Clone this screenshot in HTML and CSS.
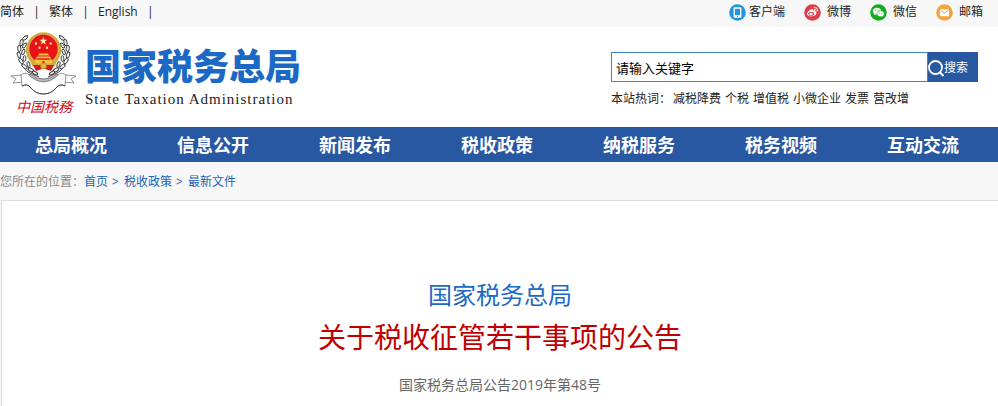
FILE: index.html
```html
<!DOCTYPE html>
<html lang="zh-CN">
<head>
  <meta charset="UTF-8">
  <meta name="viewport" content="width=device-width, initial-scale=1.0">
  <title>国家税务总局</title>
  <link rel="stylesheet" href="styles.css">
</head>
<body>

  <div class="topbar">
    <div class="langs">
      <a href="#">简体</a><span class="sep">|</span>
      <a href="#">繁体</a><span class="sep">|</span>
      <a href="#">English</a><span class="sep">|</span>
    </div>
    <div class="links">
      <a class="app" href="#">
        <svg viewBox="0 0 17 17"><circle cx="8.5" cy="8.5" r="8.3" fill="#2196dc"/><rect x="4.600" y="3.300" width="7.800" height="10.400" rx="1.2" fill="#fff"/><rect x="6" y="4.800" width="5" height="6.400" fill="#2196dc"/><circle cx="8.5" cy="12.4" r=".6" fill="#2196dc"/></svg>
        客户端</a>
      <a href="#">
        <svg viewBox="0 0 17 17"><circle cx="8.5" cy="8.5" r="8.3" fill="#dd3f4a"/><path d="M7.6 5.2c.9-.5 1.6 0 1.3 1.2 1.5-.5 2.7-.2 2.4 1 1.6.6 1.3 2.2.2 3.3-2.2 2.2-8.2 2.2-8.5-.7C2.900 8.300 5.600 5.800 7.600 5.200z" fill="#fff"/><ellipse cx="7.2" cy="9.800" rx="3" ry="2" fill="#dd3f4a"/><ellipse cx="7" cy="9.900" rx="1.600" ry="1.200" fill="#fff"/><path d="M10.300 3.600c2.300-.4 3.900 1.200 3.400 3.500M10.500 5.300c1.200-.2 1.900.5 1.700 1.600" fill="none" stroke="#fff" stroke-width=".9" stroke-linecap="round"/></svg>
        微博</a>
      <a href="#">
        <svg viewBox="0 0 17 17"><circle cx="8.5" cy="8.5" r="8.3" fill="#0fae1c"/><path d="M7 3.800c-2.400 0-4.200 1.500-4.200 3.400 0 1.100.6 2 1.500 2.600l-.4 1.400 1.600-.8c.5.1 1 .2 1.500.2 2.400 0 4.200-1.500 4.200-3.400S9.400 3.800 7 3.800z" fill="#fff"/><path d="M10.700 6.700c-2.100 0-3.700 1.300-3.700 3s1.600 3 3.700 3c.4 0 .9-.1 1.300-.2l1.300.7-.3-1.200c.8-.6 1.300-1.400 1.300-2.300 0-1.700-1.600-3-3.600-3z" fill="#fff" stroke="#0fae1c" stroke-width=".6"/><g fill="#0fae1c"><circle cx="5.600" cy="6.100" r=".6"/><circle cx="8.300" cy="6.100" r=".6"/><circle cx="9.500" cy="9" r=".5"/><circle cx="11.900" cy="9" r=".5"/></g></svg>
        微信</a>
      <a href="#">
        <svg viewBox="0 0 17 17"><circle cx="8.5" cy="8.5" r="8.3" fill="#f3a53a"/><rect x="4" y="5.200" width="9" height="7" rx=".8" fill="#fff"/><path d="M4.500 6l4 3.300 4-3.300" fill="none" stroke="#f3a53a" stroke-width="1"/></svg>
        邮箱</a>
    </div>
  </div>

  <header class="header">
    <a class="brand" href="#">
      <span class="emblem">
        <svg viewBox="10 30 68 67">
          <!-- wheat on both sides, the right one mirrors the left -->
          <defs>
            <g id="wheat">
              <path d="M28 35C17 44 16 62 28 72l11 5" fill="none" stroke="#444" stroke-width="1"/>
              <g fill="#eee" stroke="#333" stroke-width=".9">
                <ellipse cx="25" cy="38" rx="1.500" ry="3" transform="rotate(50 25 38)"/>
                <ellipse cx="21.500" cy="42.500" rx="1.600" ry="3.200" transform="rotate(10 21.500 42.500)"/>
                <ellipse cx="19.300" cy="48.500" rx="1.600" ry="3.200" transform="rotate(-5 19.300 48.500)"/>
                <ellipse cx="19" cy="55" rx="1.600" ry="3.200" transform="rotate(-20 19 55)"/>
                <ellipse cx="21" cy="61" rx="1.600" ry="3.200" transform="rotate(-35 21 61)"/>
                <ellipse cx="24.500" cy="66.500" rx="1.600" ry="3.200" transform="rotate(-50 24.500 66.500)"/>
                <ellipse cx="24.500" cy="45.500" rx="1.400" ry="3" transform="rotate(35 24.500 45.500)"/>
                <ellipse cx="23.300" cy="52" rx="1.400" ry="3" transform="rotate(20 23.300 52)"/>
                <ellipse cx="24.500" cy="58.500" rx="1.400" ry="3" transform="rotate(5 24.500 58.500)"/>
                <ellipse cx="28.500" cy="64.500" rx="1.400" ry="3" transform="rotate(-15 28.500 64.500)"/>
                <ellipse cx="31" cy="70" rx="1.600" ry="3.200" transform="rotate(-60 31 70)"/>
                <ellipse cx="35" cy="73" rx="1.400" ry="3" transform="rotate(-60 35 73)"/>
              </g>
            </g>
          </defs>
          <use href="#wheat"/>
          <use href="#wheat" transform="translate(87 0) scale(-1 1)"/>
          <!-- ribbon -->
          <path d="M30 74q6 5 13.500 5T57 74l4 4q-8 7-17.500 7T26 78z" fill="#bbb" stroke="#555" stroke-width=".8"/>
          <path d="M21 75l-10 1 5 3-3 4 11-1zM66 75l10 1-5 3 3 4-11-1z" fill="#fff" stroke="#666" stroke-width=".7"/>
          <path d="M21 75c2-2 5-2 7-1l3 3q6 5 12.500 5T56 77l3-3c2-1 5-1 7 1l-1 11q-5-3-9 2-5 6-12.500 6T31 88q-4-5-9-2z" fill="#fff" stroke="#666" stroke-width=".7"/>
          <path d="M22 86q5-3 9 2 5 6 12.500 6T56 88q4-5 9-2" fill="none" stroke="#444" stroke-width="1"/>
          <!-- national emblem -->
          <circle cx="43.500" cy="50" r="17.700" fill="#d6b043"/>
          <circle cx="43.500" cy="50" r="16.300" fill="none" stroke="#b8952f" stroke-width="1" stroke-dasharray="1.500 1.500"/>
          <circle cx="43.500" cy="49" r="14.200" fill="#ea1219"/>
          <path d="M43.300 37l1 2.800h3l-2.400 1.800.9 2.900-2.500-1.800-2.500 1.800.9-2.900-2.400-1.800h3z" fill="#fff6a0"/>
          <g fill="#fbe07a"><circle cx="36" cy="43.500" r="1.200"/><circle cx="39.500" cy="47.700" r="1.200"/><circle cx="47" cy="47.700" r="1.200"/><circle cx="50.600" cy="43.500" r="1.200"/></g>
          <path d="M39 53.500h9l1 2h-11zM37 56.500h13l1.500 2h-16zM35 59.500h17v4H35z" fill="#f6c43c"/>
          <path d="M38.500 58.500h10v1h-10zM42.500 61h2v2.500h-2z" fill="#c8201b"/>
          <path d="M30 60q13 9 27 0l-2 6q-11 5-23 0z" fill="#d9a934"/>
          <path d="M33 65l8 0h5l8 0-3 6-6-2h-3l-6 2z" fill="#d8161b"/>
          <circle cx="43.500" cy="66" r="3" fill="#e5b63a" stroke="#a87b1d" stroke-width=".6"/>
        </svg>
        <span class="caption">中国税務</span>
      </span>
      <span class="names">
        <span class="name-cn">国家税务总局</span>
        <span class="name-en">State Taxation Administration</span>
      </span>
    </a>

    <div class="search">
      <form class="search-form">
        <input type="text" value="请输入关键字" aria-label="关键字">
        <button type="submit">
          <svg viewBox="0 0 16 17"><circle cx="7.500" cy="7.500" r="6.500" fill="none" stroke="#fff" stroke-width="1.800"/><path d="M11.500 12l4 4" stroke="#fff" stroke-width="2"/></svg>搜索</button>
      </form>
      <div class="hot">
        <span>本站热词：</span>
        <a href="#">减税降费</a>
        <a href="#">个税</a>
        <a href="#">增值税</a>
        <a href="#">小微企业</a>
        <a href="#">发票</a>
        <a href="#">营改增</a>
      </div>
    </div>
  </header>

  <nav class="nav">
    <a href="#">总局概况</a>
    <a href="#">信息公开</a>
    <a href="#">新闻发布</a>
    <a href="#">税收政策</a>
    <a href="#">纳税服务</a>
    <a href="#">税务视频</a>
    <a href="#">互动交流</a>
  </nav>

  <div class="crumbs">
    <span>您所在的位置：</span>
    <a href="#">首页</a>
    <b>&gt;</b>
    <a href="#">税收政策</a>
    <b>&gt;</b>
    <a href="#">最新文件</a>
  </div>

  <main class="article">
    <h2>国家税务总局</h2>
    <h1>关于税收征管若干事项的公告</h1>
    <p>国家税务总局公告2019年第48号</p>
  </main>

</body>
</html>
```
FILE: styles.css
```css
* {
  box-sizing: border-box;
}

body {
  margin: 0;
  background: #f7f7f7;
  color: #222;
  font-family: "Open Sans", "Noto Sans CJK SC", sans-serif;
  font-size: 12px;
  line-height: 20px;
}

a {
  color: inherit;
  text-decoration: none;
}

svg {
  display: block;
  flex: none;
}

.topbar {
  display: flex;
  justify-content: space-between;
  height: 27px;
  padding: 2px 15px 5px 0;
}

.langs,
.links,
.links a {
  display: flex;
  align-items: center;
}

.sep {
  width: 25px;
  text-align: center;
}

.links {
  gap: 19px;
}

.links a {
  gap: 6px;
}

.links .app {
  gap: 3px;
}

.links svg {
  width: 17px;
  height: 17px;
}

.header {
  display: flex;
  justify-content: space-between;
  height: 100px;
  padding: 3px 20px 0 10px;
  background: #fff;
}

.brand {
  display: flex;
  gap: 7px;
}

.emblem svg {
  width: 68px;
  height: 67px;
}

.caption {
  display: block;
  padding-left: 6px;
  color: #c8101c;
  font-size: 14px;
  font-style: italic;
  line-height: 20px;
}

.names {
  padding-top: 16px;
}

.name-cn {
  display: block;
  color: #1b69c4;
  font-size: 36px;
  font-weight: 900;
  line-height: 42px;
}

.name-en {
  display: block;
  font-family: "Liberation Serif", serif;
  font-size: 15px;
  letter-spacing: 1px;
  line-height: 22px;
}

.search {
  width: 367px;
  padding-top: 22px;
}

.search-form {
  display: flex;
  height: 30px;
}

.search-form input {
  flex: 1;
  min-width: 0;
  padding: 0 4px;
  border: 1px solid #3c86c6;
  background: #fff;
  color: #000;
  font: 13px "Open Sans", "Noto Sans CJK SC", sans-serif;
}

.search-form button {
  display: flex;
  align-items: center;
  width: 50px;
  padding: 0;
  border: none;
  background: #2858a2;
  color: #fff;
  font: 12px "Open Sans", "Noto Sans CJK SC", sans-serif;
}

.search-form svg {
  width: 16px;
  height: 17px;
  margin-top: 3px;
}

.hot {
  display: flex;
  gap: 4px;
  padding-top: 7px;
}

.hot span {
  width: 58px;
  white-space: nowrap;
}

.nav {
  display: grid;
  grid-template-columns: repeat(7, 1fr);
  padding: 2px 4px 0 0;
  background: #2858a2;
  color: #fff;
  font-size: 18px;
  font-weight: bold;
  line-height: 33px;
  text-align: center;
}

.crumbs {
  display: flex;
  gap: 4px;
  padding: 10px 0 8px;
  color: #888;
}

.crumbs span {
  width: 80px;
  white-space: nowrap;
}

.crumbs a,
.crumbs b {
  color: #1b62b5;
  font-weight: normal;
}

.crumbs b {
  width: 8px;
}

.article {
  min-height: 206px;
  margin-left: 1px;
  padding: 74px 0 8px;
  border: 1px solid #ddd;
  border-width: 1px 0 0 1px;
  background: #fff;
  text-align: center;
}

.article h2,
.article h1,
.article p {
  margin: 0;
  font-weight: normal;
}

.article h2 {
  color: #1b69c4;
  font-size: 24px;
  line-height: 40px;
}

.article h1 {
  color: #c00000;
  font-size: 28px;
  line-height: 44px;
}

.article p {
  padding-top: 16px;
  color: #666;
  font-size: 14px;
  line-height: 20px;
}
```
